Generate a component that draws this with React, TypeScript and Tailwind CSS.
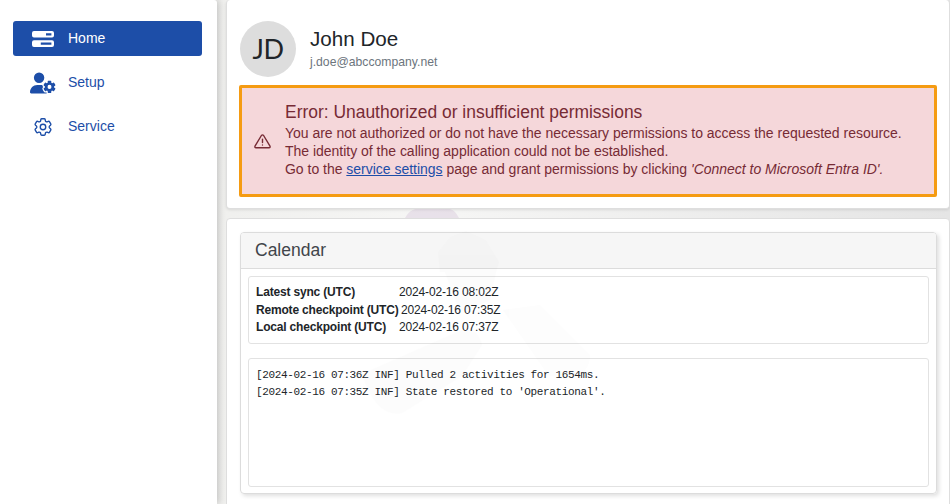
import React from "react";
import { FaUserGear } from "react-icons/fa6";
import { HiOutlineCog6Tooth } from "react-icons/hi2";

function Backdrop() {
  return (
    <svg className="pointer-events-none absolute inset-0 z-10" width="950" height="504" aria-hidden="true">
      <path d="M405 218 Q409 210 416 209 H450 Q455 210 459 218 Z" fill="#b690be" opacity="0.2" />
      <g fill="#555" opacity="0.012">
        <path d="M438 252 L450 237 L466 231 L486 240 L499 262 L496 272 L440 272 Z" />
        <path d="M362 374 L462 330 Q478 328 482 345 L462 376 L402 413 Q376 418 362 374 Z" />
        <path d="M503 310 L540 305 L590 355 Q590 376 565 380 L548 375 Z" />
        <path d="M445 272 H496 L490 300 L460 312 Z" />
      </g>
    </svg>
  );
}

function BarsIcon() {
  return (
    <svg className="h-[16px] w-[22px]" viewBox="0 0 22 16" fill="currentColor" fillRule="evenodd">
      <path d="M2 0 H20 Q22 0 22 2 V4.6 Q22 6.6 20 6.6 H2 Q0 6.6 0 4.6 V2 Q0 0 2 0 Z M14 2.2 V4.5 H19.4 V2.2 Z" />
      <path d="M2 9.2 H20 Q22 9.2 22 11.2 V14 Q22 16 20 16 H2 Q0 16 0 14 V11.2 Q0 9.2 2 9.2 Z M8.8 11.5 V13.8 H19.4 V11.5 Z" />
    </svg>
  );
}

function WarningIcon() {
  return (
    <svg className="ml-[12px] h-[15px] w-[17px] shrink-0" viewBox="0 0 17 15" fill="none" stroke="currentColor" strokeWidth="1.4" strokeLinejoin="round" strokeLinecap="round">
      <path d="M7.4 1.5 L1 12.2 Q.5 13.7 2 13.8 H15 Q16.5 13.7 16 12.2 L9.6 1.5 Q8.5 .3 7.4 1.5 Z" />
      <path d="M8.5 5.3 V8.5 M8.5 11 V11.1" />
    </svg>
  );
}

function NavItem({ icon, label, active = false }: { icon: React.ReactNode; label: string; active?: boolean }) {
  return (
    <a
      className={`flex h-[35px] items-center rounded-[3px] ${active ? "bg-[#1d4ea8] text-white" : "text-[#1d4ea8]"}`}
    >
      <span className="ml-[16px] flex w-[28px] justify-center">{icon}</span>
      <span className="ml-[11px] pb-[2px] text-[14px] leading-[18px]">{label}</span>
    </a>
  );
}

const checkpoints = [
  { name: "Latest sync (UTC)", time: "2024-02-16 08:02Z", width: "w-[143px]" },
  { name: "Remote checkpoint (UTC)", time: "2024-02-16 07:35Z", width: "w-[145px]" },
  { name: "Local checkpoint (UTC)", time: "2024-02-16 07:37Z", width: "w-[143px]" },
];

export default function App() {
  return (
    <div className="relative flex h-[504px] w-[950px] overflow-hidden bg-linear-to-r from-[#e9e9e6] via-[#f6f6f5] via-45% to-[#e5e5e5] font-['Liberation_Sans',Arial,sans-serif]">
      <nav className="flex w-[217px] shrink-0 flex-col gap-[9px] rounded-tr-[3px] bg-white pt-[21px] pr-[15px] pl-[13px] shadow-[2px_0_7px_rgba(0,0,0,0.18)]">
        <NavItem active label="Home" icon={<BarsIcon />} />
        <NavItem label="Setup" icon={<FaUserGear className="size-[26px]" />} />
        <NavItem label="Service" icon={<HiOutlineCog6Tooth className="size-[22px]" />} />
      </nav>

      <main className="ml-[9px] flex w-[724px] shrink-0 flex-col gap-[9px]">
        <section className="h-[209px] shrink-0 rounded-[4px] border border-t-0 border-[#dedede] bg-white px-[12px] shadow-[0_1px_3px_rgba(0,0,0,0.1)]">
          <header className="flex h-[85px] items-start pt-[21px]">
            <div className="ml-px flex size-[56px] items-center justify-center rounded-full bg-[#dddddd] pb-[2px] font-['Lato','Open_Sans',sans-serif] text-[27px] leading-none tracking-[-0.5px] text-[#212529]">
              JD
            </div>
            <div className="ml-[14px] pt-[5px]">
              <h1 className="text-[20.6px] leading-[26px] text-[#212529]">John Doe</h1>
              <p className="mt-[2px] text-[12.2px] leading-[16px] text-[#6c757d]">j.doe@abccompany.net</p>
            </div>
          </header>
          <div className="flex h-[112px] w-[698px] items-center rounded-[2px] border-3 border-[#f59b12] bg-[#f5d7da] text-[#772b35]">
            <WarningIcon />
            <div className="ml-[14px] pb-[2px] whitespace-nowrap">
              <h2 className="mb-px text-[17.45px] leading-[21px]">Error: Unauthorized or insufficient permissions</h2>
              <div className="text-[14px] leading-[18px] tracking-[-0.015px]">
                <p>You are not authorized or do not have the necessary permissions to access the requested resource.</p>
                <p>The identity of the calling application could not be established.</p>
                <p>
                  Go to the <a className="text-[#1d4ea8] underline">service settings</a> page and grant permissions by clicking{" "}
                  <em>'Connect to Microsoft Entra ID'.</em>
                </p>
              </div>
            </div>
          </div>
        </section>

        <section className="h-[300px] shrink-0 rounded-[4px] border border-[#dedede] bg-white px-[13px] pt-[13px]">
          <div className="flex h-[262px] w-[697px] flex-col rounded-[4px] border border-[#dcdcdc] shadow-[2px_2px_4px_rgba(0,0,0,0.13)]">
            <h2 className="h-[36px] shrink-0 rounded-t-[3px] border-b border-[#dcdcdc] bg-[#f6f6f6] pl-[14px] text-[17.5px] leading-[35px] text-[#41454a]">
              Calendar
            </h2>
            <div className="mx-[7px] mt-[7px] h-[68px] shrink-0 rounded-[3px] border border-[#e2e2e2] pt-[7px] pl-[7px] text-[12px] leading-[17.5px] text-[#212529]">
              {checkpoints.map((row) => (
                <div key={row.name} className="flex whitespace-nowrap">
                  <b className={`${row.width} tracking-[-0.18px]`}>{row.name}</b>
                  <span className="tracking-[-0.15px]">{row.time}</span>
                </div>
              ))}
            </div>
            <pre className="mx-[7px] mt-[14px] h-[129px] shrink-0 rounded-[3px] border border-[#e2e2e2] pt-[8px] pl-[7px] font-['Liberation_Mono',monospace] text-[11px] leading-[16.5px] tracking-[-0.36px] text-[#212529]">
              {"[2024-02-16 07:36Z INF] Pulled 2 activities for 1654ms.\n[2024-02-16 07:35Z INF] State restored to 'Operational'."}
            </pre>
          </div>
        </section>
      </main>
      <Backdrop />
    </div>
  );
}
